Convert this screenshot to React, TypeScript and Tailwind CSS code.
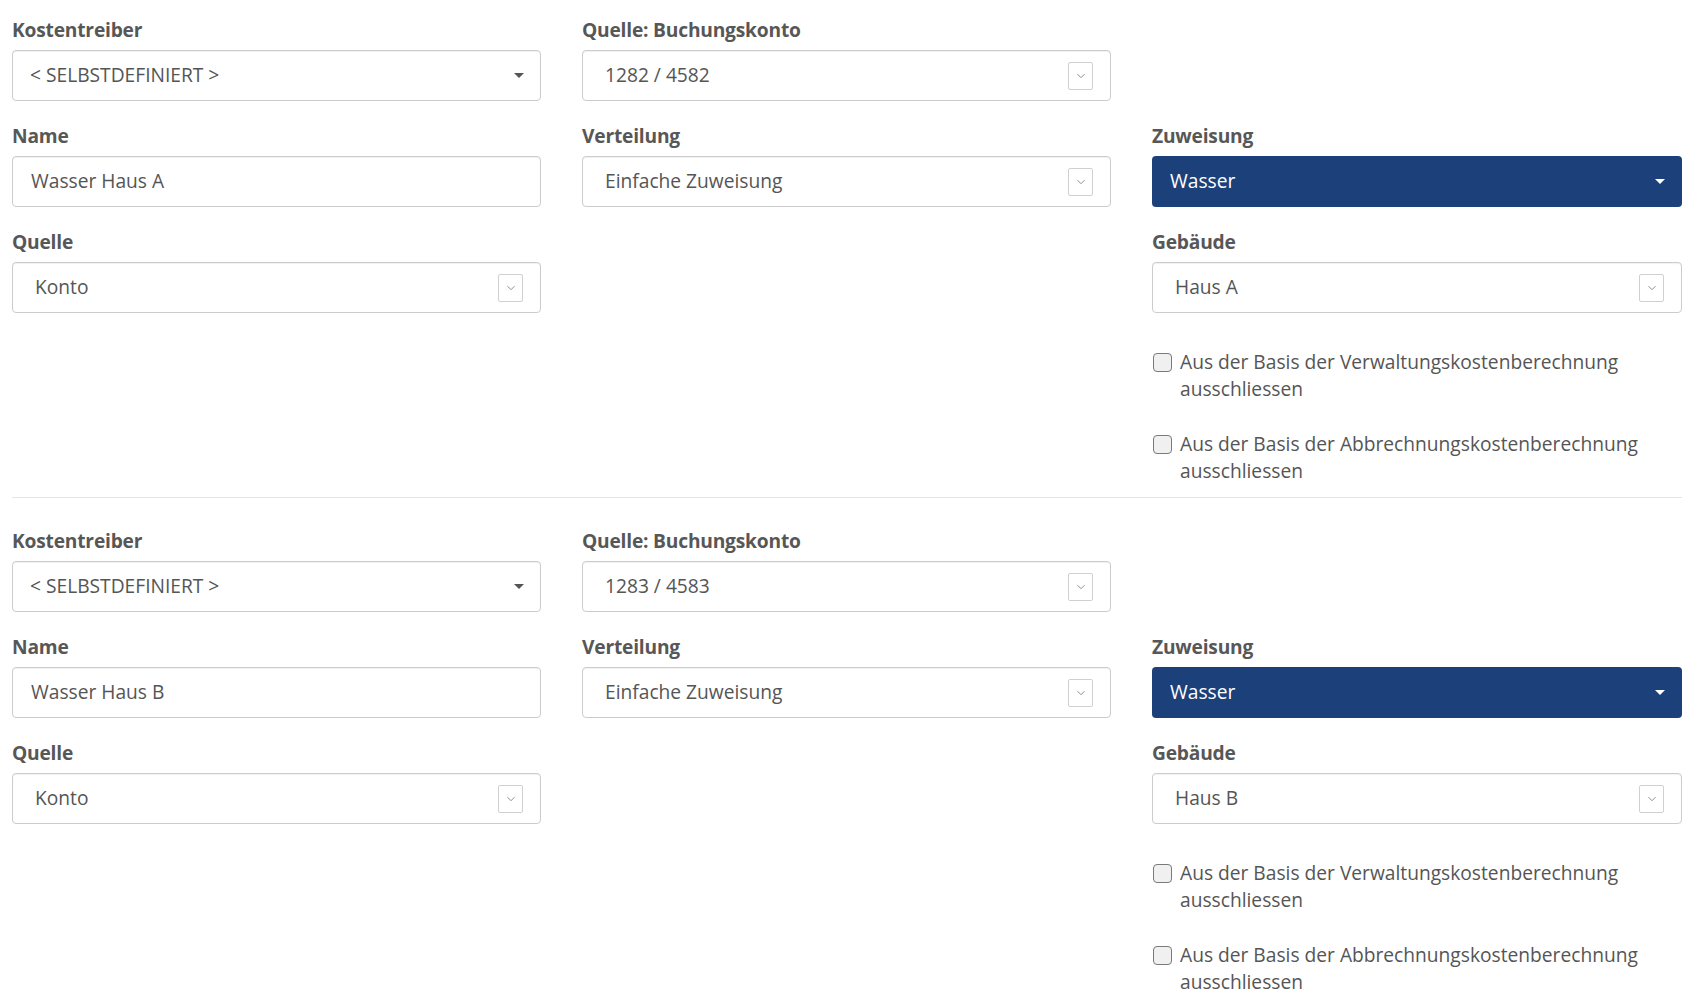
import type { ReactNode } from 'react';

type Block = {
  konto: string;
  name: string;
  gebaeude: string;
};

const blocks: Block[] = [
  { konto: '1282 / 4582', name: 'Wasser Haus A', gebaeude: 'Haus A' },
  { konto: '1283 / 4583', name: 'Wasser Haus B', gebaeude: 'Haus B' },
];

function Label({ children }: { children: ReactNode }) {
  return (
    <div className="h-[27px] mb-[8px] pt-[1px] text-[19.2px] leading-[27px] font-bold tracking-[-0.2px] text-[#575757]">
      {children}
    </div>
  );
}

function Caret({ light }: { light?: boolean }) {
  return (
    <svg width="10" height="5" viewBox="0 0 10 5" className="shrink-0">
      <path d="M0 0h10L5 5z" fill={light ? '#ffffff' : '#555555'} />
    </svg>
  );
}

function ChevronBox() {
  return (
    <div className="w-[25px] h-[28px] shrink-0 flex items-center justify-center bg-white border border-[#d0d0d0] rounded-[2px]">
      <svg width="10" height="6" viewBox="0 0 10 6" fill="none">
        <path d="M1.5 1.2l3.5 3.5 3.5-3.5" stroke="#808080" strokeWidth="0.9" />
      </svg>
    </div>
  );
}

// plain select with a solid caret on the right
function CaretSelect({ value }: { value: string }) {
  return (
    <div className="h-[51px] flex items-center justify-between pl-[17px] pr-[16px] bg-white border border-[#cccccc] rounded-[4px] shadow-[inset_0_1px_1px_rgba(0,0,0,0.06)] text-[19.2px] text-[#555555]">
      <span>{value}</span>
      <Caret />
    </div>
  );
}

// select with a boxed chevron button
function BoxSelect({ value }: { value: string }) {
  return (
    <div className="h-[51px] flex items-center justify-between pl-[22px] pr-[17px] bg-white border border-[#cccccc] rounded-[4px] shadow-[inset_0_1px_1px_rgba(0,0,0,0.06)] text-[19.2px] text-[#555555]">
      <span>{value}</span>
      <ChevronBox />
    </div>
  );
}

function TextInput({ value }: { value: string }) {
  return (
    <div className="h-[51px] flex items-center pl-[18px] bg-white border border-[#cccccc] rounded-[4px] shadow-[inset_0_1px_1px_rgba(0,0,0,0.06)] text-[19.2px] text-[#555555]">
      {value}
    </div>
  );
}

function PrimarySelect({ value }: { value: string }) {
  return (
    <div className="h-[51px] flex items-center justify-between pl-[18px] pr-[17px] bg-[#1c407a] rounded-[4px] text-[19.2px] text-white">
      <span>{value}</span>
      <Caret light />
    </div>
  );
}

function Check({ text }: { text: string }) {
  return (
    <label className="flex items-start gap-[8px] pl-[1px] text-[19.2px] leading-[27px] text-[#555555]">
      <span className="mt-[5px] w-[19px] h-[19px] shrink-0 rounded-[4px] border border-[#7a7a7a] bg-[#f0f0f0]" />
      <span>{text}</span>
    </label>
  );
}

function CostBlock({ b, first }: { b: Block; first: boolean }) {
  return (
    <div className={first ? 'pt-[15px] pb-[13px] border-b border-[#e5e5e5]' : 'pt-[28px] pb-[13px]'}>
      <div className="grid grid-cols-[529px_529px_530px] gap-x-[41px] gap-y-[20px]">
        <div>
          <Label>Kostentreiber</Label>
          <CaretSelect value="< SELBSTDEFINIERT >" />
        </div>
        <div>
          <Label>Quelle: Buchungskonto</Label>
          <BoxSelect value={b.konto} />
        </div>
        <div />

        <div>
          <Label>Name</Label>
          <TextInput value={b.name} />
        </div>
        <div>
          <Label>Verteilung</Label>
          <BoxSelect value="Einfache Zuweisung" />
        </div>
        <div>
          <Label>Zuweisung</Label>
          <PrimarySelect value="Wasser" />
        </div>

        <div>
          <Label>Quelle</Label>
          <BoxSelect value="Konto" />
        </div>
        <div />
        <div>
          <Label>Gebäude</Label>
          <BoxSelect value={b.gebaeude} />
          <div className="mt-[35px] flex flex-col gap-[28px]">
            <Check text="Aus der Basis der Verwaltungskostenberechnung ausschliessen" />
            <Check text="Aus der Basis der Abbrechnungskostenberechnung ausschliessen" />
          </div>
        </div>
      </div>
    </div>
  );
}

export default function App() {
  return (
    <div className="min-h-screen bg-white pl-[12px] pr-[16px] font-['Open_Sans',sans-serif]">
      {blocks.map((b, i) => (
        <CostBlock key={b.name} b={b} first={i === 0} />
      ))}
    </div>
  );
}
